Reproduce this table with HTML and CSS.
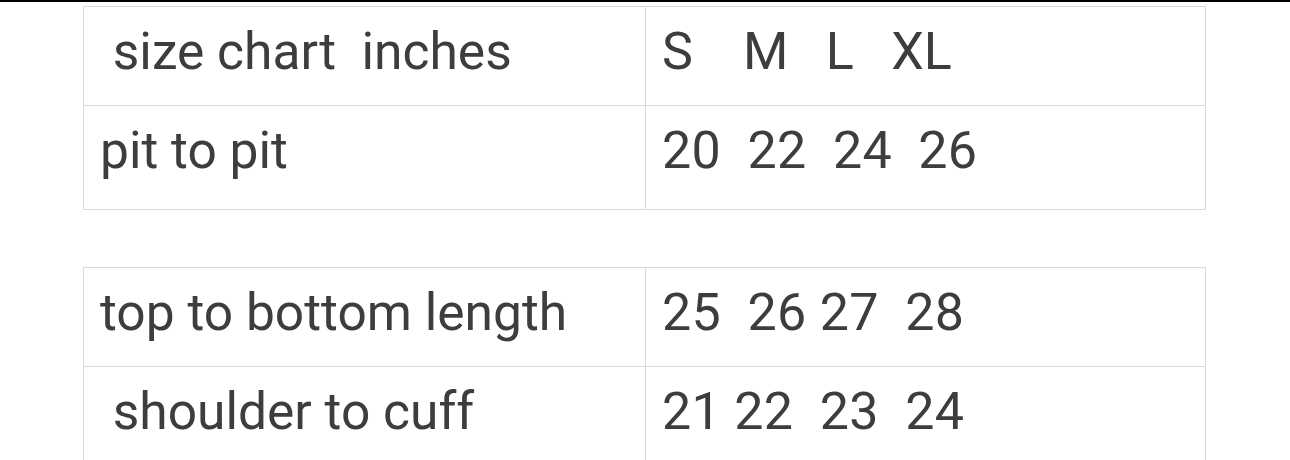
FILE: index.html
```html
<!DOCTYPE html>
<html lang="en">
<head>
<meta charset="utf-8">
<title>Size chart</title>
<link rel="stylesheet" href="styles.css">
</head>
<body>
<div class="topbar"></div>
<main class="sheet">
  <div class="chart">
    <div class="cell label r1"> size chart  inches</div>
    <div class="cell value sizes r1">S    M   L   XL</div>
    <div class="cell label r2">pit to pit</div>
    <div class="cell value r2">20  22  24  26</div>
  </div>
  <div class="chart">
    <div class="cell label r1">top to bottom length</div>
    <div class="cell value r1">25  26 27  28</div>
    <div class="cell label r2"> shoulder to cuff</div>
    <div class="cell value r2">21 22  23  24</div>
  </div>
</main>
</body>
</html>
```
FILE: styles.css
```css
html, body {
  margin: 0;
  padding: 0;
  background: #ffffff;
}

body {
  font-family: Roboto, "Liberation Sans", sans-serif;
  color: #3d3d3d;
  overflow: hidden;
}

.topbar {
  height: 2px;
  background: #000000;
}

.sheet {
  display: flex;
  flex-direction: column;
  gap: 57px;
  padding: 4px 0 0 83px;
}

.chart {
  display: grid;
  grid-template-columns: 562px 560px;
  width: max-content;
  border-top: 1px solid #d9d9d9;
  border-left: 1px solid #d9d9d9;
}

.cell {
  box-sizing: border-box;
  border-right: 1px solid #d9d9d9;
  border-bottom: 1px solid #d9d9d9;
  padding: 15px 0 0 16px;
  font-size: 52px;
  line-height: 60px;
  white-space: pre;
}

.label {
  font-size: 51.5px;
}

.value {
  letter-spacing: 0.3px;
}

.value.sizes {
  letter-spacing: -0.3px;
}

.r1 {
  height: 99px;
}

.r2 {
  height: 104px;
}
```
